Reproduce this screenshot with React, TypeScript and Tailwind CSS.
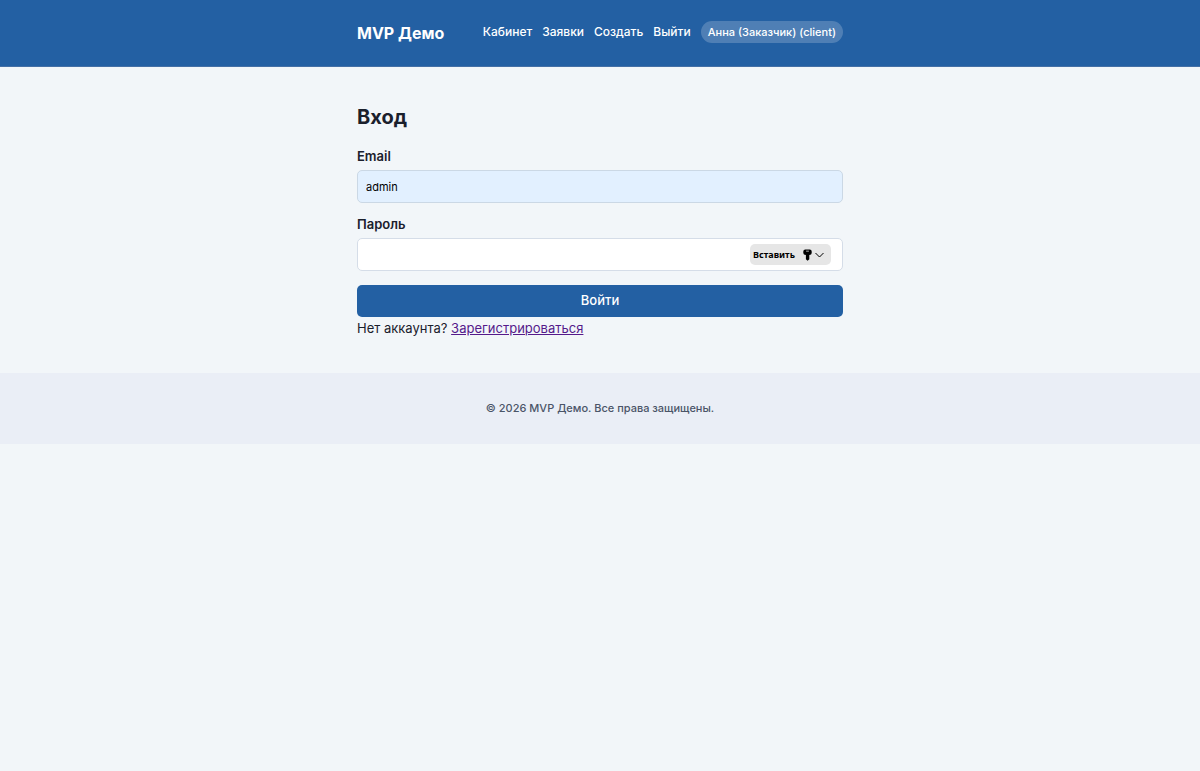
import type { ReactNode } from 'react'

const navLinks = [
  { href: '#cabinet', label: 'Кабинет' },
  { href: '#requests', label: 'Заявки' },
  { href: '#create', label: 'Создать' },
  { href: '#logout', label: 'Выйти' },
]

function Container({ children }: { children: ReactNode }) {
  return <div className="mx-auto w-full max-w-[518px] px-4">{children}</div>
}

function Header() {
  return (
    <header className="border-b border-[#4470a6] bg-[#2360a3] pt-[21px] pb-[21px] text-white">
      <Container>
        <div className="flex items-start justify-between">
          <a href="#home" className="text-[16px] leading-6 font-bold">MVP Демо</a>
          <nav className="flex items-center gap-[10px] text-[12px] leading-[22px] font-medium">
            {navLinks.map((link) => (
              <a key={link.href} href={link.href}>{link.label}</a>
            ))}
            <span className="rounded-full bg-white/20 px-[7px] text-[11px]">Анна (Заказчик) (client)</span>
          </nav>
        </div>
      </Container>
    </header>
  )
}

function PasswordFill() {
  return (
    <button
      type="button"
      className="absolute top-[6px] right-3 flex h-[21px] items-center rounded-[5px] bg-[#e6e6e6] pr-[7px] pl-[3px] font-['Noto_Sans',sans-serif] text-[9px] font-bold text-black"
    >
      Вставить
      <svg className="ml-2 h-3 w-[9px]" viewBox="0 0 9 12" fill="currentColor" aria-hidden="true">
        <path fillRule="evenodd" d="M2.3.5h4.4Q8.7.6 8.7 2.6v1.3Q8.7 5.9 6.3 6v4.3L4.6 11.7 2.9 10.3V6Q.3 5.9.3 3.9V2.6Q.3.6 2.3.5ZM3.1 1.7v.8h2.8v-.8Z" />
      </svg>
      <svg className="ml-[3px] h-[6px] w-[9px]" viewBox="0 0 9 6" fill="none" stroke="currentColor" aria-hidden="true">
        <path d="M.5 1l4 4 4-4" />
      </svg>
    </button>
  )
}

function LoginForm() {
  return (
    <form onSubmit={(e) => e.preventDefault()}>
      <label htmlFor="email" className="block text-[13px] leading-5 font-semibold">Email</label>
      <input
        id="email"
        type="text"
        defaultValue="admin"
        className="mt-1 block h-[33px] w-full rounded-[5px] border border-[#cbd8e5] bg-[#e2f0ff] px-2 text-[11px] text-black"
      />

      <label htmlFor="password" className="mt-[11px] block text-[13px] leading-5 font-semibold">Пароль</label>
      <div className="relative mt-1">
        <input
          id="password"
          type="password"
          className="block h-[33px] w-full rounded-[5px] border border-[#d5dde8] bg-white pr-24 pl-2 text-[11px]"
        />
        <PasswordFill />
      </div>

      <button type="submit" className="mt-[14px] block h-8 w-full rounded-[5px] bg-[#2360a3] text-[13px] font-medium text-white">
        Войти
      </button>
    </form>
  )
}

export default function App() {
  return (
    <div className="min-h-screen bg-[#f2f6f9] font-[Inter,sans-serif] text-[#1a202c]">
      <Header />
      <main className="pt-[37px] pb-[34px]">
        <Container>
          <h1 className="mb-4 text-[20px] leading-[26px] font-bold">Вход</h1>
          <LoginForm />
          <p className="text-[13px] leading-[22px]">
            Нет аккаунта? <a href="#register" className="text-[#551a8b] underline">Зарегистрироваться</a>
          </p>
        </Container>
      </main>
      <footer className="bg-[#eaeef6] py-[26px] text-center text-[11px] leading-[19px] font-medium text-[#4a5568]">
        © 2026 MVP Демо. Все права защищены.
      </footer>
    </div>
  )
}
